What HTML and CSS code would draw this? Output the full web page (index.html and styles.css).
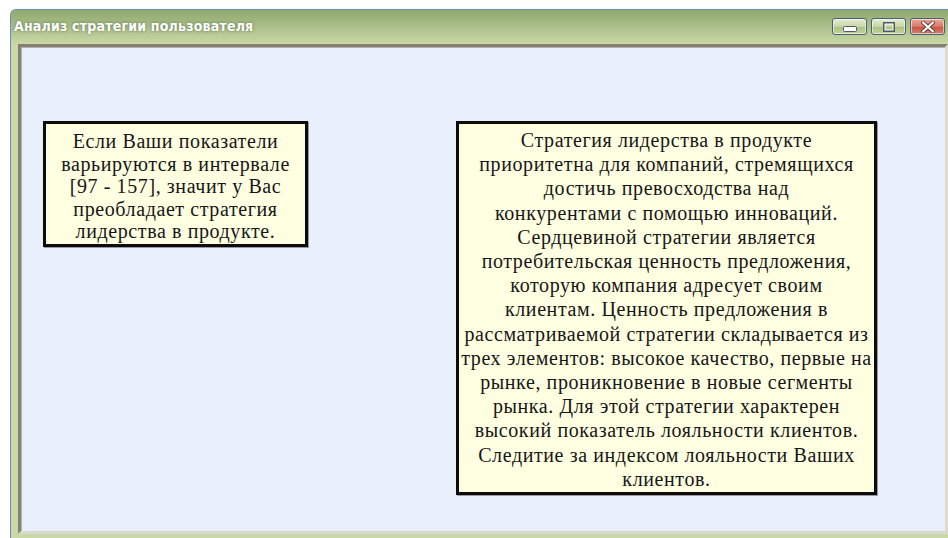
FILE: index.html
```html
<!DOCTYPE html>
<html lang="ru">
<head>
<meta charset="utf-8">
<title>Анализ стратегии пользователя</title>
<link rel="stylesheet" href="styles.css">
</head>
<body>
<div class="window">
  <div class="titlebar">
    <span class="title">Анализ стратегии пользователя</span>
    <div class="controls">
      <button class="ctl ctl-min" aria-label="Свернуть">
        <svg width="14" height="6" viewBox="0 0 14 6"><rect x="0.5" y="0.5" width="13" height="5" rx="1" fill="#fff" stroke="#4b5a66"/></svg>
      </button>
      <button class="ctl ctl-max" aria-label="Развернуть">
        <svg width="12" height="10" viewBox="0 0 12 10"><rect x="1" y="1" width="10" height="8" fill="none" stroke="#4b5a66" stroke-width="2"/><rect x="2" y="2" width="8" height="6" fill="none" stroke="#fff" stroke-width="1"/></svg>
      </button>
      <button class="ctl ctl-close" aria-label="Закрыть">
        <svg width="16" height="12" viewBox="0 0 16 12"><path d="M3 1.5 L13 10.5 M13 1.5 L3 10.5" stroke="#6a3a3a" stroke-width="4" stroke-linecap="round"/><path d="M3 1.5 L13 10.5 M13 1.5 L3 10.5" stroke="#fff" stroke-width="2.2" stroke-linecap="round"/></svg>
      </button>
    </div>
  </div>
  <div class="frame">
    <div class="client">
      <div class="note note-range">Если Ваши показатели варьируются в интервале [97 - 157], значит у Вас преобладает стратегия лидерства в продукте.</div>
      <div class="note note-desc">Стратегия лидерства в продукте<br>приоритетна для компаний, стремящихся<br>достичь превосходства над<br>конкурентами с помощью инноваций.<br>Сердцевиной стратегии является<br>потребительская ценность предложения,<br>которую компания адресует своим<br>клиентам. Ценность предложения в<br>рассматриваемой стратегии складывается из<br>трех элементов: высокое качество, первые на<br>рынке, проникновение в новые сегменты<br>рынка. Для этой стратегии характерен<br>высокий показатель лояльности клиентов.<br>Следитие за индексом лояльности Ваших<br>клиентов.</div>
    </div>
  </div>
</div>
</body>
</html>
```
FILE: styles.css
```css
html, body {
  margin: 0;
  padding: 0;
  background: #ffffff;
  overflow: hidden;
  width: 948px;
  height: 538px;
}

.window {
  margin: 9px 0 0 10px;
  width: 938px;
  height: 529px;
  display: flex;
  flex-direction: column;
  border-left: 1px solid #6d8db3;
  border-top: 1px solid #6d8db3;
  border-top-left-radius: 6px;
  background: #c9d8a6;
  box-sizing: border-box;
}

.titlebar {
  height: 32px;
  flex: none;
  display: flex;
  align-items: flex-start;
  justify-content: space-between;
  background: linear-gradient(#8fa96f 0%, #a6bc86 45%, #c6d6a2 100%);
  border-top-left-radius: 5px;
  padding: 0 0 0 3px;
}

.title {
  margin-top: 8px;
  font-family: "DejaVu Sans Condensed", "DejaVu Sans", sans-serif;
  font-weight: bold;
  font-size: 14px;
  letter-spacing: 0.2px;
  color: #ffffff;
  text-shadow: 0 0 3px rgba(70, 90, 50, 0.8);
}

.controls {
  display: flex;
  gap: 4px;
  margin: 8px 3px 0 0;
}

.ctl {
  width: 35px;
  height: 17px;
  padding: 0;
  border: 1px solid #4a6076;
  border-radius: 3px;
  display: flex;
  align-items: center;
  justify-content: center;
  box-shadow: inset 0 0 0 1px rgba(255, 255, 255, 0.55);
}

.ctl-min,
.ctl-max {
  background: linear-gradient(#e4ecd2 0%, #c7d6a6 50%, #a9bf82 51%, #c2d59c 100%);
}

.ctl-min svg {
  margin-top: 5px;
}

.ctl-close {
  background: linear-gradient(#eba79a 0%, #d8786a 50%, #c3523f 51%, #d8826e 100%);
}

.frame {
  flex: 1;
  display: flex;
  padding: 2px 0 4px 7px;
}

.client {
  flex: 1;
  display: flex;
  align-items: flex-start;
  gap: 148px;
  padding: 74px 0 0 22px;
  background: #e9f0fb;
  border-style: solid;
  border-width: 3px;
  border-color: #858176 #dcd9cf #dcd9cf #858176;
  box-shadow: inset 1px 1px 0 #b5b2a8;
}

.note {
  flex: none;
  box-sizing: border-box;
  background: #ffffe1;
  border: 3px solid #0c0c0c;
  box-shadow: 1px 1px 0 #9a9a9a;
  font-family: "Liberation Serif", "Times New Roman", serif;
  font-size: 20px;
  letter-spacing: 0.6px;
  color: #161616;
  text-align: center;
}

.note-range {
  width: 265px;
  padding: 6px 2px 1px;
  line-height: 22.5px;
}

.note-desc {
  width: 421px;
  padding: 4px 0 1px;
  line-height: 24.2px;
  white-space: nowrap;
}
```
